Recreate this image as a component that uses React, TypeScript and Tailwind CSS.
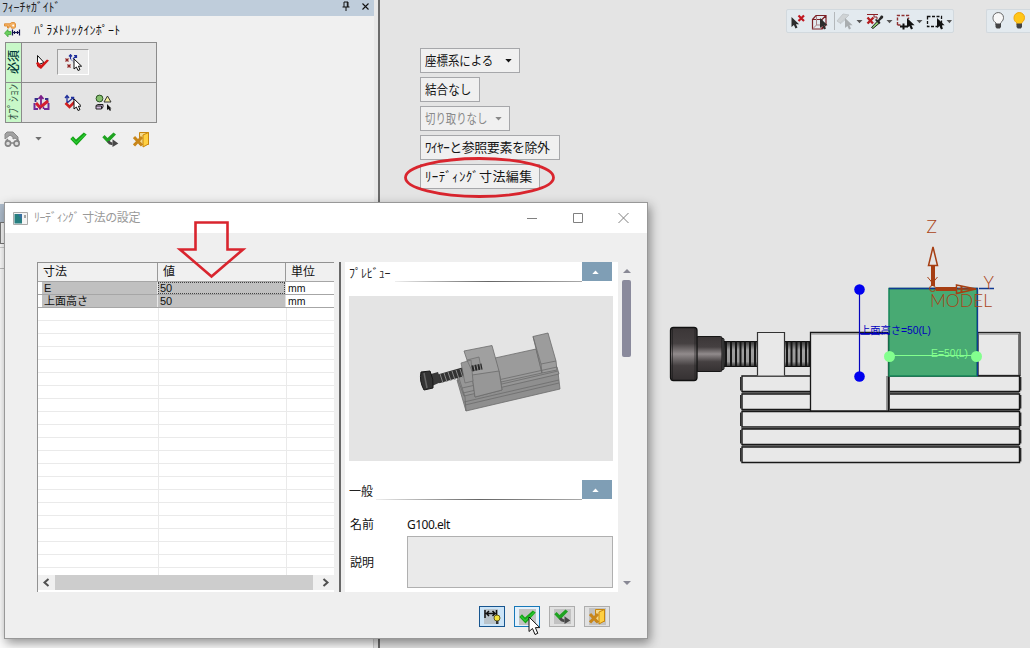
import React from "react";

const Check = ({ className = "" }: { className?: string }) => (
  <svg className={className} width="17" height="14" viewBox="0 0 17 14">
    <path d="M0.3 7 L3 4.2 L6 7.4 L13.8 0.6 L16.7 2.6 L6.5 13.4 Z" fill="#16a516" />
    <path d="M2 6.4 L6.2 10.6 L15 2.4" stroke="#2ccc36" strokeWidth="1.2" fill="none" />
  </svg>
);

const CheckNext = () => (
  <svg width="17" height="15" viewBox="0 0 17 15">
    <path d="M0.3 5.3 L2.6 3 L5.5 6 L11.5 0.4 L14 2.4 L5.8 11 Z" fill="#1fa321" />
    <path d="M6.5 9 C7 11 8 11.8 10.5 11.8" stroke="#484848" strokeWidth="2.8" fill="none" />
    <path d="M10.5 7.2 L16.3 11.4 L10.5 15 Z" fill="#484848" />
  </svg>
);

const Exit = () => (
  <svg width="17" height="17" viewBox="0 0 17 17">
    <path d="M6.5 1.5 H15.5 V13.5 H6.5 Z" fill="#f4d88a" stroke="#c8860c" />
    <path d="M10 4 L15.5 1.5 V13 L10 16 Z" fill="#ffd042" stroke="#c8860c" strokeWidth="1" />
    <path d="M1 6 L9 14.5 M9 6 L1 14.5" stroke="#c8861a" strokeWidth="3" />
  </svg>
);

const CursorPath = ({ x = 0, y = 0, fill = "#2c2c2c", stroke = "none" }: { x?: number; y?: number; fill?: string; stroke?: string }) => (
  <path transform={`translate(${x} ${y})`} d="M0 0 V10 L2.4 8 L4 11.5 L6 10.6 L4.4 7.2 H7.6 Z" fill={fill} stroke={stroke} />
);

const Caret = ({ className = "" }: { className?: string }) => (
  <svg className={className} width="7" height="4" viewBox="0 0 7 4">
    <path d="M0.3 0 H6.7 L3.5 3.6 Z" fill="currentColor" />
  </svg>
);

const KeyImport = () => (
  <svg width="17" height="16" viewBox="0 0 17 16">
    <path d="M0.5 1.8 H6 L7.5 0.6 H10.500 L11.500 2 V5 L10.500 6.200 H7.500 L6.500 4 H5 V6 H3.500 V4 H0.500 Z" fill="#f5b266" stroke="#dc8a30" strokeWidth="0.9" />
    <circle cx="9.2" cy="3.4" r="1" fill="#fff" />
    <path d="M0.5 11 L4 7.6 V9.6 H7 V12.6 H4 V14.8 Z" fill="#6cd05e" stroke="#3fa53b" strokeWidth="0.8" />
    <path d="M8.5 7.5 V13.5 M15.5 7.5 V13.5 M9 10.5 H15 M10.5 9 V12 M13.5 9 V12" stroke="#12124e" strokeWidth="1.2" />
  </svg>
);

const SelectRequired = () => (
  <svg width="17" height="17" viewBox="0 0 17 17">
    <path d="M3.5 1.5 V12 L6 10 L10 8.500 Z" fill="#fff" stroke="#111" />
    <path d="M2 9 L4.200 8 L7 11 L13 5.500 L15 6.500 L7 15 L4 13 Z" fill="#d41818" />
  </svg>
);

const PointSelect = () => (
  <svg width="17" height="17" viewBox="0 0 17 17">
    <path d="M5.5 5 V1 M4 2.5 L5.500 0.700 L7 2.500 M8 5 L11 2 M9 1.500 H11.500 V4" stroke="#1f2f9c" strokeWidth="1.200" fill="none" />
    <path d="M5.500 5 L10 9.500" stroke="#1f2f9c" strokeDasharray="1 1" />
    <path d="M0.500 4.500 L3.500 7.500 M3.500 4.500 L0.500 7.500 M2.500 10.500 L5.500 13.500 M5.500 10.500 L2.500 13.500" stroke="#8f2222" strokeWidth="1.200" />
    <CursorPath x={9} y={5} fill="#fff" stroke="#111" />
  </svg>
);

const OptionAxes = () => (
  <svg width="17" height="16" viewBox="0 0 17 16">
    <path d="M8 1.5 V10 M5.500 4 L8 1 L10.500 4" stroke="#7d1e88" strokeWidth="1.8" fill="none" />
    <path d="M5 4 H2.500 V7 M12 4 H14.500 V7" stroke="#34308a" strokeWidth="1.800" fill="none" />
    <path d="M1.500 8 V14 H5 M15.500 8 V14 H11" stroke="#6f2a98" strokeWidth="2" fill="none" />
    <path d="M3 8 L7 12.500 L15 6" stroke="#d41e30" strokeWidth="3" fill="none" />
    <path d="M7 14.500 V12 M10.500 14 V11.500" stroke="#7d1e88" strokeWidth="1.500" />
  </svg>
);

const OptionFrame = () => (
  <svg width="17" height="17" viewBox="0 0 17 17">
    <path d="M3 9 V2 M1 4 L3 1.500 L5 4 M3 9 L9 4 M7 3.500 H9.600 V6" stroke="#20309a" strokeWidth="1.300" fill="none" />
    <path d="M1.500 9 L5.500 13 L12 6.500" stroke="#cf2020" strokeWidth="2.600" fill="none" />
    <CursorPath x={10} y={5} fill="#fff" stroke="#111" />
  </svg>
);

const OptionShapes = () => (
  <svg width="18" height="17" viewBox="0 0 18 17">
    <circle cx="4.500" cy="4.500" r="3.400" fill="#86bf6e" stroke="#2b5324" />
    <path d="M12.500 2 L9 8 H16 Z" fill="#f4ef9c" stroke="#333" />
    <path d="M1 11.500 L3 10.500 H8 V13 L6.500 15 H1 Z M1 12 H6.500 V15" fill="#d3bade" stroke="#222" />
    <path d="M12 10 V16 L13.500 15 L15 17 L16 16 L15 14.500 H16.500 Z" fill="#111" />
  </svg>
);

const Glasses = () => (
  <svg width="17" height="17" viewBox="0 0 17 17">
    <path d="M1 8 V3 L3 1 H9 L14 6 V9 L11 7 L9 8 V6 L6 4 Z" fill="#a2a2a2" stroke="#888" />
    <path d="M2 10 L4 8 M13 8 L15 11" stroke="#808080" strokeWidth="1.400" />
    <circle cx="4" cy="12.500" r="2.600" fill="#dcdcdc" stroke="#848484" strokeWidth="1.600" />
    <circle cx="12.600" cy="12.500" r="2.600" fill="#dcdcdc" stroke="#848484" strokeWidth="1.600" />
    <path d="M6.500 12 H10" stroke="#808080" strokeWidth="1.400" />
  </svg>
);

function GuidePanel() {
  return (
    <aside className="flex h-full w-[374px] shrink-0 flex-col bg-[#f0f0f0]">
      <header className="flex h-[16px] items-center justify-between bg-[#bfcddb] pl-[2px] pr-[5px]">
        <span className="whitespace-nowrap text-[12px] leading-[14px] tracking-[-0.2px] text-[#222]">ﾌｨｰﾁｬｶﾞｲﾄﾞ</span>
        <div className="flex items-center gap-[12px] pb-[4px] text-[#111]">
          <svg width="8" height="10" viewBox="0 0 8 10"><path d="M2 1 H6 V6 M2 1 V6 M0.5 6 H7.5 M4 6 V10 M5.3 1 V6" stroke="currentColor" fill="none" /></svg>
          <svg width="7" height="7" viewBox="0 0 7 7"><path d="M0.5 0.5 L6.5 6.5 M6.5 0.5 L0.5 6.5" stroke="currentColor" strokeWidth="1.1" /></svg>
        </div>
      </header>
      <div className="flex h-[26px] items-center gap-[13px] pl-[4px] pt-[2px]">
        <KeyImport />
        <h1 className="whitespace-nowrap pt-px text-[12px] tracking-[0.2px] text-[#111]">ﾊﾟﾗﾒﾄﾘｯｸｲﾝﾎﾟｰﾄ</h1>
      </div>
      <div className="ml-[5px] grid h-[81px] w-[152px] grid-rows-2 border border-[#8b8b8b] bg-[#e4e4e4]">
        <div className="flex border-b border-[#8b8b8b]">
          <div className="flex w-[16px] items-center justify-center border-r border-[#8b8b8b] bg-[#c8f8c8]">
            <span className="-rotate-90 whitespace-nowrap text-[12px] font-medium text-[#003838]">必須</span>
          </div>
          <div className="flex items-center pl-[12px]">
            <SelectRequired />
            <div className="ml-[6px] flex h-[26px] w-[32px] items-center justify-center border border-[#a0a0a0] border-b-white border-r-white bg-[#ebebeb]"><PointSelect /></div>
          </div>
        </div>
        <div className="flex">
          <div className="flex w-[16px] items-center justify-center border-r border-[#8b8b8b] bg-[#c8f8c8]">
            <span className="-rotate-90 whitespace-nowrap text-[12px] text-[#3c5c4c]">ｵﾌﾟｼｮﾝ</span>
          </div>
          <div className="flex items-center gap-[14px] pl-[11px] pt-[1px]"><OptionAxes /><OptionFrame /><OptionShapes /></div>
        </div>
      </div>
      <div className="flex h-[32px] items-center pl-[4px]">
        <Glasses />
        <Caret className="ml-[14px] text-[#707070]" />
        <Check className="ml-[28px]" />
        <div className="ml-[15px]"><CheckNext /></div>
        <div className="ml-[14px]"><Exit /></div>
      </div>
      <div className="mt-[49px] flex grow flex-col border-r border-[#cfcfcf] bg-[#fbfbfb]">
        <div className="h-[18px] bg-[#aebccb]" />
        <div className="h-[22px] w-[20px] border border-[#777] bg-[#f4f4f4]" />
        <div className="mt-[3px] h-px bg-[#ccc]" />
        <div className="mt-[20px] h-px bg-[#bbb]" />
      </div>
    </aside>
  );
}

function ViewToolbar() {
  return (
    <div className="flex items-start justify-end gap-[32px] pt-[9px]">
      <div className="flex h-[24px] w-[168px] items-center rounded-[2px] border border-[#d2d9de] bg-[#e3eaef] pl-[3px] text-[#555]">
        <svg width="162" height="22" viewBox="0 0 162 22">
          <CursorPath x={1.500} y={7} />
          <path d="M8.500 5.500 L14 11 M14 5.500 L8.500 11" stroke="#c01822" strokeWidth="2.200" />
          <path d="M22.500 9.500 H32 V19 H22.500 Z M22.500 9.500 L26 5.500 H36 V15 L32 19 M32 9.500 L36 5.500" stroke="#7c2026" strokeWidth="1.200" fill="none" />
          <path d="M26.500 6 V15 H32 M26.500 15 L23 18.500" stroke="#a88186" fill="none" />
          <CursorPath x={30} y={8} />
          <path d="M44.500 2 V20" stroke="#b4b8bb" />
          <path d="M47 11 L53 4 L59 5 L56 8 L50 13 Z M50 14 L56 9" fill="#cfd3d5" stroke="#c3c8cb" />
          <CursorPath x={55} y={8} fill="#a9adaf" />
          <path d="M66.500 10 H72.500 L69.500 13.200 Z M96.500 10 H102.500 L99.500 13.200 Z M126.500 10 H132.500 L129.500 13.200 Z M156.500 10 H162 L159.500 13.200 Z" fill="#555" />
          <path d="M77 4.500 H88 M84 5 V7 H87 V9" stroke="#8b2026" fill="none" />
          <path d="M77.500 7.500 L83 13.500 M83.500 7.500 L77.500 13.500" stroke="#b51c20" strokeWidth="2.400" />
          <path d="M81.500 17.500 L87.500 11 L89.500 13 L83 18.500 Z" fill="#8dcf72" stroke="#222" />
          <path d="M86 9 L88 10 L91 5.500 Q94 5 93 8 L89.500 11 L90.500 13 L89 14 L85 10 Z" fill="#282828" />
          <path d="M107.500 15 V5.500 H118.500 V9 M107.500 15 H111" stroke="#8f3030" strokeDasharray="3 1.500" fill="none" strokeWidth="1.400" />
          <path d="M110 16.500 H117 M113.500 13.500 V19.500" stroke="#111" strokeWidth="2" />
          <CursorPath x={117} y={8} fill="#111" />
          <path d="M137.500 6.500 H151.500 V16.500 H137.500 Z" stroke="#111" strokeWidth="1.300" strokeDasharray="3 1.500" fill="none" />
          <CursorPath x={147} y={8} fill="#111" />
        </svg>
      </div>
      <div className="flex h-[24px] w-[44px] items-center gap-[8px] rounded-l-[2px] border border-r-0 border-[#d2d9de] bg-[#e3eaef] pl-[5px]">
        <Bulb on={false} /><Bulb on />
      </div>
    </div>
  );
}

const Bulb = ({ on }: { on: boolean }) => (
  <svg className="shrink-0" width="13" height="18" viewBox="0 0 13 18">
    <path d="M4 11 C1 9 1 7 1 5.600 A5.200 5 0 0 1 11.500 5.600 C11.500 7 11 9 8.500 11 V13 H4 Z" fill={on ? "#ffc619" : "#f8f8f8"} stroke={on ? "#f0a40a" : "#666"} />
    <path d="M3.500 11.500 H9 V15 L7.800 16.500 H4.700 L3.500 15 Z" fill="#444" />
  </svg>
);

const OptionButton = ({ className, children, menu }: { className: string; children: React.ReactNode; menu?: boolean }) => (
  <button className={`flex h-[25px] items-center justify-between border border-[#a6a7aa] bg-[#f0f0f0] pl-[4px] pr-[7px] text-[13px] leading-none ${className}`}>
    <span className="flex whitespace-nowrap">{children}</span>
    {menu && <Caret />}
  </button>
);

function Vise() {
  const steps = [376, 394, 411.5, 429, 447];
  const threads = [726, 731, 736, 740.5, 745, 750, 755];
  return (
    <svg className="absolute left-[280px] top-[210px]" width="370" height="270" viewBox="660 210 370 270">
      <defs>
        <linearGradient id="steel" x2="0" y2="1"><stop stopColor="#3b3637" /><stop offset=".3" stopColor="#454041" /><stop offset=".5" stopColor="#918b8c" /><stop offset=".72" stopColor="#454041" /><stop offset="1" stopColor="#353132" /></linearGradient>
        <linearGradient id="thread" x2="0" y2="1"><stop stopColor="#333" /><stop offset=".35" stopColor="#a0a0a0" /><stop offset=".8" stopColor="#9a9a9a" /><stop offset="1" stopColor="#303030" /></linearGradient>
      </defs>
      {steps.map((y, i) => (
        <g key={y} fill="#e8e8e8" stroke="#181818">
          <path d={`M742 ${y} H1019.500 V${y + 15.5} H742 Z`} strokeWidth="1.400" />
          <path d={`M740.700 ${y + 1} V${y + 14.5} M1020.700 ${y + 1} V${y + 14.5}`} stroke="#222" strokeWidth="1.300" />
          {i < 4 && <path d={`M742 ${y + 16.7} H1019`} stroke="#5c5c5c" strokeWidth="1.600" />}
        </g>
      ))}
      <rect x="724" y="341.500" width="34" height="25" fill="url(#thread)" stroke="#111" />
      <rect x="784" y="341.500" width="27" height="25" fill="url(#thread)" stroke="#111" />
      {threads.map((x) => <path key={x} d={`M${x} 341 V366.500`} stroke="#161616" strokeWidth="2" />)}
      {[787, 791.5, 796.5, 801, 806, 809.5].map((x) => <path key={x} d={`M${x} 341 V366.500`} stroke="#161616" strokeWidth="2" />)}
      <rect x="721" y="338.500" width="3" height="31" rx="1" fill="#555" stroke="#111" />
      <rect x="696.500" y="336.500" width="25.500" height="35" rx="1.500" fill="url(#steel)" stroke="#161616" />
      <rect x="670.500" y="327.500" width="26.500" height="53" rx="3" fill="url(#steel)" stroke="#111" strokeWidth="1.300" />
      <path d="M672.500 329 V379 M695 329 V379" stroke="#1a1a1a" opacity=".6" />
      <path d="M757.500 375.500 V332.500 H784.500 V375.500" fill="#e8e8e8" stroke="#333" strokeWidth="1.200" />
      <path d="M810.500 411 V332.500 H888.500 V411 Z" fill="#e8e8e8" stroke="#181818" strokeWidth="1.300" />
      <path d="M811 334 H888" stroke="#888" />
      <path d="M887 376 V411 M889.500 376 V411" stroke="#444" />
      <rect x="978" y="332.500" width="42" height="43" fill="#e8e8e8" stroke="#222" strokeWidth="1.300" />
      <path d="M978 334 H1019 M1018.500 334 V375" stroke="#777" />
      <rect x="889" y="288.500" width="88" height="87.500" fill="#48aa73" stroke="#168558" strokeWidth="1.500" />
      <path d="M889 288.500 H977.500 V376 M979 288.500 H994" stroke="#103a92" strokeWidth="1.300" fill="none" />
      <path d="M859.500 290 V376" stroke="#0505bd" strokeWidth="1.200" />
      <circle cx="859.500" cy="289.500" r="5.300" fill="#0000ef" /><circle cx="859.500" cy="376.500" r="5.300" fill="#0000ef" />
      <path d="M890 355.500 H976" stroke="#83ff8e" />
      <circle cx="889.500" cy="356.500" r="5.500" fill="#83ff8e" /><circle cx="976.500" cy="356.500" r="5.500" fill="#83ff8e" />
      <path d="M860 333.500 H889" stroke="#0000bd" />
      <g fontFamily="'Liberation Sans', 'Noto Sans CJK JP', sans-serif">
        <text x="860" y="334" fill="#0000bd" fontSize="10" textLength="71" lengthAdjust="spacingAndGlyphs">上面高さ=50(L)</text>
        <text x="931" y="357" fill="#83ff8e" fontSize="10.500" textLength="37" lengthAdjust="spacingAndGlyphs">E=50(L)</text>
      </g>
      <g fontFamily="Lato, sans-serif" fontWeight="300" fill="#aa4316" fontSize="17.500">
        <text x="926.500" y="233" textLength="12">Z</text>
        <text x="983.500" y="289" textLength="12">Y</text>
        <text x="930" y="307" textLength="62">MODEL</text>
      </g>
      <g stroke="#a63e12" fill="none">
        <path d="M933 266 V286" strokeWidth="4" />
        <path d="M933 247 L928.500 265.500 H937.500 Z" strokeWidth="1.500" />
        <path d="M936 289 H957" strokeWidth="4" />
        <path d="M956.500 285 L976 289 L956.500 293.500 Z M958 289 H974" strokeWidth="1.500" />
        <path d="M961.500 286 V292.500" strokeWidth="2" />
        <circle cx="932.500" cy="288.500" r="3" />
        <path d="M927.500 277 L932.500 283 L937.500 277" />
      </g>
    </svg>
  );
}

function PreviewModel() {
  return (
    <svg width="263" height="165" viewBox="350 296 263 165">
      <g fill="#999" stroke="#6c6c6c" strokeWidth=".8">
        <path d="M457 380 L557 371 L558 372 L560 389 L466 411 Z" fill="#8f8f8f" />
        <path d="M457 370 L535 350 L557 367 L559 374 L464 396 L457 377 Z" fill="#969696" />
        <path d="M495 358 L536 349 L542 373 L501 382 Z" fill="#9b9b9b" />
        <path d="M533 336.500 L548 333 L556 361 L557 370 L542 373 Z" fill="#9c9c9c" />
        <path d="M533 336.500 L541 364 L556 361 M541 364 L542 373" fill="none" />
        <path d="M457 372 L465 397 L466 411 M462 388 L557 367 M463 393 L558 371 M464 402 L559 380 M465 405 L559 383" fill="none" />
        <path d="M464 351 L492 345.500 L499 371 L502 390 L475 397 L472 375 Z" fill="#a0a0a0" />
        <path d="M472 375 L499 371 L502 390 L475 397 Z" fill="#979797" />
      </g>
      <path d="M438 379 L466 371" stroke="#333" strokeWidth="9" />
      <path d="M440 374 L443 383 M444 373 L447 382 M448 372 L451 381 M452 371 L455 380 M456 370 L459 379 M460 369 L463 378" stroke="#888" />
      <path d="M461 363 L471 360 L473 381 L465 383 Z M467 360 L479 357 L481 368 L472 371 Z" fill="#989898" stroke="#6c6c6c" strokeWidth=".7" />
      <path d="M472 368.500 L482 366.500" stroke="#282828" strokeWidth="6" strokeDasharray="2 1" />
      <path d="M431 374 L438 372 L441 382 L432 386 Z" fill="#393939" />
      <path d="M421 372 L430 371 Q434 379 433 388 L424 390 Q419 381 421 372" fill="#333" stroke="#181818" />
      <path d="M424 373 L427 388" stroke="#666" strokeWidth="1.500" />
    </svg>
  );
}

const SectionHeader = ({ title, className = "" }: { title: string; className?: string }) => (
  <div className="flex h-[20px] items-end">
    <h2 className={`relative top-[1px] shrink-0 whitespace-nowrap text-[12px] leading-[18px] text-[#222] ${className}`}>{title}</h2>
    <div className="h-px grow bg-linear-to-r from-[#eee] via-[#666] to-[#aaa]" />
    <button className="mb-[1px] flex h-[19px] w-[30px] items-center justify-center bg-[#7f9eb5] pr-[4px]"><Caret className="rotate-180 text-white" /></button>
  </div>
);

function DimensionTable() {
  const rows = [{ name: "E", value: "50", unit: "mm" }, { name: "上面高さ", value: "50", unit: "mm" }];
  return (
    <div className="flex h-[330px] w-[297px] flex-col overflow-hidden border-l border-t border-[#929292] bg-white text-[12px] text-[#111]">
      <div className="grid h-[18px] w-[296px] shrink-0 grid-cols-[120px_128px_48px] bg-[#f0f0f0] leading-[18px]">
        <div className="border-r border-[#999] pl-[5px]">寸法</div>
        <div className="border-r border-[#999] pl-[5px]">値</div>
        <div className="pl-[5px]">単位</div>
      </div>
      <div className="flex h-[294px] shrink-0 flex-col overflow-hidden">
        {rows.map((row, i) => (
          <div key={row.name} className="grid h-[13px] shrink-0 grid-cols-[120px_128px_48px] border-t border-[#a6a6a6] text-[11px] leading-[13px]">
            <div className="border-r border-[#e8e8e8] pl-[4px]"><div className="h-[12px] bg-[#c0c0c0] pl-[2px]">{row.name}</div></div>
            <div className="border-r border-[#e0e0e0] bg-[#c0c0c0]">
              <div className={i === 0 ? "h-[12px] border border-dotted border-[#444] pl-px leading-[11px]" : "h-[12px] pl-[2px]"}>{row.value}</div>
            </div>
            <div className="pl-[2px] text-[10.5px]">{row.unit}</div>
          </div>
        ))}
        {Array.from({ length: 21 }, (_, i) => (
          <div key={i} className={`grid h-[13px] shrink-0 grid-cols-[121px_128px_47px] border-t ${i === 0 ? "border-[#a6a6a6]" : "border-[#eaeaea]"}`}>
            <div className="border-r border-[#eaeaea]" /><div className="border-r border-[#eaeaea]" />
          </div>
        ))}
      </div>
      <div className="flex h-[15px] shrink-0 items-center bg-[#f0f0f0]">
        <svg width="17" height="15" viewBox="0 0 17 15"><path d="M10.500 4 L6.500 7.500 L10.500 11" stroke="#505050" strokeWidth="2" fill="none" /></svg>
        <div className="h-full w-[258px] bg-[#cdcdcd]" />
        <svg width="21" height="15" viewBox="0 0 21 15"><path d="M10.500 4 L14.500 7.500 L10.500 11" stroke="#505050" strokeWidth="2" fill="none" /></svg>
      </div>
    </div>
  );
}

function DimensionDialog() {
  return (
    <section className="absolute left-[4px] top-[202px] flex h-[437px] w-[644px] flex-col border border-[#989898] bg-[#efefef] shadow-[2px_4px_10px_rgba(0,0,0,0.42)]">
      <header className="flex h-[30px] items-center justify-between bg-white pl-[8px] pr-[17px] text-[#999]">
        <div className="flex items-center gap-[6px]">
          <svg width="15" height="13" viewBox="0 0 15 13"><path d="M.5 .5 H14.500 V12.500 H.5 Z" fill="#f4f4f4" stroke="#aaa" /><path d="M1.500 2 H9 V11.500 H1.500 Z" fill="#277f80" /><path d="M5 2 H9 V8 Z" fill="#386fa0" /><path d="M12 3 V6" stroke="#555" /></svg>
          <h1 className="whitespace-nowrap text-[12px] tracking-[-0.45px]">ﾘｰﾃﾞｨﾝｸﾞ 寸法の設定</h1>
        </div>
        <svg width="103" height="12" viewBox="0 0 103 12"><path d="M0 6.500 H10 M46.500 1.500 H55.500 V10.500 H46.500 Z M91.500 1 L101.500 11 M101.500 1 L91.500 11" stroke="#808080" fill="none" /></svg>
      </header>
      <div className="flex h-[359px] pl-[32px] pt-[29px]">
        <DimensionTable />
        <div className="ml-[5px] h-[330px] w-[2px] bg-[#686868]" />
        <div className="ml-[4px] flex h-[330px] w-[273px] flex-col bg-white pl-[4px] pr-[6px] text-[12px]">
          <SectionHeader title="ﾌﾟﾚﾋﾞｭｰ" className="w-[46px] tracking-[-0.1px]" />
          <div className="mt-[14px] h-[165px] w-[264px] shrink-0 bg-[#e4e4e4] pl-px"><PreviewModel /></div>
          <div className="mt-[19px]"><SectionHeader title="一般" className="w-[27px]" /></div>
          <div className="flex h-[36px] items-center pt-[13px] text-[#111]"><span className="w-[58px] pl-px">名前</span><span className="font-['Noto_Sans','Noto_Sans_CJK_JP',sans-serif] tracking-[-0.5px]">G100.elt</span></div>
          <div className="flex h-[52px] items-center text-[#111]"><span className="w-[58px] shrink-0 pl-px pt-[2px]">説明</span><textarea readOnly className="h-[52px] w-[206px] shrink-0 resize-none border border-[#b0b0b0] bg-[#eaeaea]" /></div>
        </div>
        <div className="flex h-[330px] w-[17px] flex-col items-center pt-[7px] text-[#888894]">
          <svg width="8" height="4" viewBox="0 0 8 4"><path d="M0 4 L4 0 L8 4 Z" fill="currentColor" /></svg>
          <div className="mt-[7px] h-[77px] w-[9px] rounded-[2px] bg-[#8a8a9c]" />
          <svg className="mt-[224px]" width="8" height="4" viewBox="0 0 8 4"><path d="M0 0 L4 4 L8 0 Z" fill="currentColor" /></svg>
        </div>
      </div>
      <footer className="flex justify-end gap-[9px] pr-[37px] pt-[14px]">
        <button className="flex h-[21px] w-[26px] items-center justify-center border border-[#17558f] bg-[#cce4f7]">
          <svg width="17" height="17" viewBox="0 0 17 17"><path d="M0 1 H14 V16 H0 Z" fill="#b9c3ca" /><path d="M1 2 V10 M12.500 2 V8 M2 5.500 H11 M5 3 L2.500 5.500 L5 8 M8.500 3 L11 5.500 L8.500 8" stroke="#111" strokeWidth="1.500" fill="none" /><circle cx="13" cy="10" r="3" fill="#f4e33b" stroke="#665d16" /><path d="M12 13 H14.500 V16 H12 Z" fill="#333" /></svg>
        </button>
        <button className="flex h-[21px] w-[26px] items-center justify-center border border-[#1778b8] bg-[#e5f1fb]"><span className="flex h-[16px] w-[17px] items-center bg-[#c2c2c2]"><Check /></span></button>
        <button className="flex h-[21px] w-[26px] items-center justify-center border border-[#adadad] bg-[#e1e1e1]"><span className="bg-[#c2c2c2]"><CheckNext /></span></button>
        <button className="flex h-[21px] w-[26px] items-center justify-center border border-[#adadad] bg-[#e1e1e1]"><span className="bg-[#c2c2c2]"><Exit /></span></button>
      </footer>
    </section>
  );
}

export default function App() {
  return (
    <div className="relative flex h-[648px] w-[1030px] overflow-hidden bg-[#e4e4e4] font-['Liberation_Sans','Noto_Sans_CJK_JP',sans-serif]">
      <GuidePanel />
      <div className="h-full w-[6px] shrink-0 border-r-2 border-[#6b6b6b] bg-[#e8e8e8]" />
      <main className="relative flex grow flex-col">
        <ViewToolbar />
        <div className="ml-[40px] mt-[15px] flex flex-col items-start gap-[4px] text-[#151515]">
          <OptionButton className="w-[100px]" menu><span className="w-[68px] origin-left scale-x-[0.88]">座標系による</span></OptionButton>
          <OptionButton className="w-[60px]"><span className="origin-left scale-x-[0.89]">結合なし</span></OptionButton>
          <OptionButton className="w-[90px] text-[#898989]" menu><span className="w-[62px] origin-left scale-x-[0.8]">切り取りなし</span></OptionButton>
          <OptionButton className="w-[140px]"><span className="tracking-[-0.45px]">ﾜｲﾔｰと参照要素を除外</span></OptionButton>
          <OptionButton className="w-[120px]"><span className="tracking-[0.35px]">ﾘｰﾃﾞｨﾝｸﾞ寸法編集</span></OptionButton>
        </div>
        <Vise />
      </main>
      <svg className="absolute left-[404px] top-[156px]" width="152" height="44" viewBox="0 0 152 44"><ellipse cx="75.500" cy="21.500" rx="74" ry="19" fill="none" stroke="#d9252e" strokeWidth="2.800" /></svg>
      <DimensionDialog />
      <svg className="absolute left-[176px] top-[219px]" width="71" height="62" viewBox="0 0 71 62"><path d="M19.500 3.500 H51.500 V30.500 H67 L35.500 57.500 L4 30.500 H19.500 Z" fill="none" stroke="#d9252e" strokeWidth="2.600" /></svg>
      <svg className="absolute left-[528px] top-[616px]" width="13" height="20" viewBox="0 0 13 20"><path d="M1 1 V15.500 L4.500 12.500 L7 18.500 L9.800 17.300 L7.400 11.600 H11.800 Z" fill="#fff" stroke="#111" /></svg>
    </div>
  );
}
